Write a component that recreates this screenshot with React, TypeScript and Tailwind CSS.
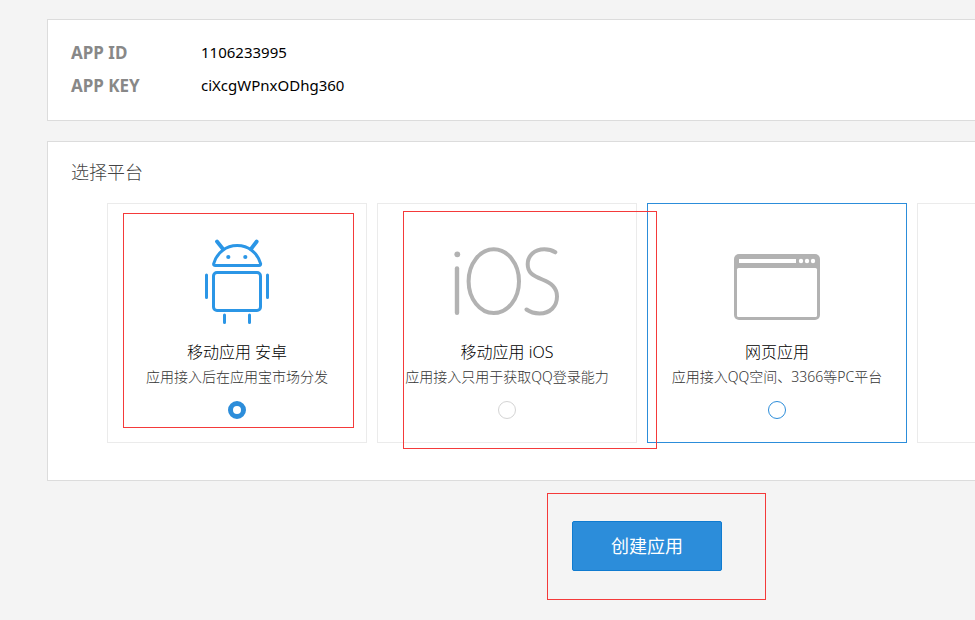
import type { ReactNode } from "react";

function AndroidIcon() {
  return (
    <svg width="120" height="92" viewBox="0 0 120 92" fill="none" stroke="#2b96e6" strokeWidth="3" strokeLinecap="round" strokeLinejoin="round" aria-hidden="true">
      <path d="M40 5.5 46 13M79.7 5.5 74 13" strokeWidth="3.8" />
      <path d="M36.7 27.6C40 16.5 49 9.6 60.2 9.6S80.4 16.5 83.6 27.6Q83.9 29.4 82 29.4H38.3Q36.3 29.4 36.7 27.6Z" />
      <circle cx="51.3" cy="21" r="2.1" fill="#2b96e6" stroke="none" />
      <circle cx="68.3" cy="21" r="2.1" fill="#2b96e6" stroke="none" />
      <rect x="36.5" y="36.5" width="47" height="38" rx="3.5" />
      <path d="M29.5 39V61.5M90.5 39V61.5M47.5 79V86.5M72.5 79V86.5" />
    </svg>
  );
}

function IosIcon() {
  return (
    <svg width="120" height="92" viewBox="0 0 120 92" fill="none" stroke="#b2b2b2" strokeWidth="4" strokeLinecap="round" aria-hidden="true">
      <circle cx="10.3" cy="18.3" r="2.9" fill="#b2b2b2" stroke="none" />
      <path d="M10 32.5V76.7" strokeWidth="4.4" />
      <ellipse cx="46.8" cy="45.2" rx="25.2" ry="31.9" />
      <path d="M108.3 16.3C105 14.2 101.5 13.3 97.3 13.3C87.5 13.3 80.7 19.5 80.7 28.3C80.7 36.5 85.5 39.5 95.3 43.5C104.5 47.2 110 51.5 110 60.5C110 70.5 103 77.4 92.5 77.4C87.5 77.4 83 76 79.5 73.5" />
    </svg>
  );
}

function WebIcon() {
  return (
    <svg width="120" height="92" viewBox="0 0 120 92" aria-hidden="true">
      <rect x="17" y="18" width="86" height="66" rx="5" fill="#b2b2b2" />
      <rect x="20" y="32" width="80" height="49" rx="1.5" fill="#fff" />
      <rect x="22" y="23" width="57" height="4" fill="#fff" />
      <circle cx="84" cy="25" r="2.2" fill="#fff" />
      <circle cx="90" cy="25" r="2.2" fill="#fff" />
      <circle cx="96" cy="25" r="2.2" fill="#fff" />
    </svg>
  );
}

type CardProps = {
  icon: ReactNode;
  title: string;
  desc: string;
  value: string;
  border?: string;
  radio?: string;
  checked?: boolean;
  mark?: string;
};

function PlatformCard({ icon, title, desc, value, border = "border-[#ebebeb]", radio = "border-[#d4d4d4]", checked, mark }: CardProps) {
  return (
    <label className={`relative flex w-[260px] cursor-pointer flex-col items-center border bg-white pt-8 pb-[23px] ${border}`}>
      {icon}
      <span className="mt-3 text-base leading-6 text-black">{title}</span>
      <span className="text-sm leading-[26px] whitespace-nowrap text-[#333]">{desc}</span>
      <input
        type="radio"
        name="platform"
        value={value}
        defaultChecked={checked}
        className={`mt-[11px] size-[18px] appearance-none rounded-full border bg-white checked:border-5 checked:border-[#2c8dda] ${radio}`}
      />
      {mark && <span className={`pointer-events-none absolute z-10 border border-[#f43a3a] ${mark}`} />}
    </label>
  );
}

export default function App() {
  return (
    <div className="min-h-screen overflow-x-hidden bg-[#f4f4f4] pt-[19px] pl-[47px] font-['Noto_Sans','Noto_Sans_CJK_SC',sans-serif] font-light">
      <main className="min-w-[1200px]">
        <section className="border border-[#dcdcdc] bg-white px-[23px] pt-4 pb-[18px]">
          <dl className="grid grid-cols-[130px_1fr] leading-[33px]">
            <dt className="text-[17px] font-bold text-[#888]">APP ID</dt>
            <dd className="text-[15px] font-normal text-black">1106233995</dd>
            <dt className="text-[17px] font-bold text-[#888]">APP KEY</dt>
            <dd className="text-[15px] font-normal text-black">ciXcgWPnxODhg360</dd>
          </dl>
        </section>

        <section className="mt-5 border border-[#dcdcdc] bg-white px-[23px] pt-4 pb-[37px]">
          <h2 className="text-lg leading-7 text-[#444]">选择平台</h2>
          <div className="mt-[17px] flex gap-2.5 pl-9">
            <PlatformCard
              icon={<AndroidIcon />}
              title="移动应用 安卓"
              desc="应用接入后在应用宝市场分发"
              value="android"
              checked
              mark="top-[9px] left-[15px] h-[215px] w-[231px]"
            />
            <PlatformCard
              icon={<IosIcon />}
              title="移动应用 iOS"
              desc="应用接入只用于获取QQ登录能力"
              value="ios"
              mark="top-[7px] left-[25px] h-[238px] w-[254px]"
            />
            <PlatformCard
              icon={<WebIcon />}
              title="网页应用"
              desc="应用接入QQ空间、3366等PC平台"
              value="web"
              border="border-[#2c8dda]"
              radio="border-[#2c8dda]"
            />
            <div className="w-[260px] border border-[#ebebeb]" />
          </div>
        </section>

        <div className="mt-10 flex justify-center pb-12">
          <div className="relative">
            <button type="button" className="h-[50px] w-[150px] cursor-pointer rounded-xs border border-[#0f7bd0] bg-[#2c8dda] text-lg font-normal text-white">
              创建应用
            </button>
            <span className="pointer-events-none absolute -top-7 -right-11 -bottom-[29px] -left-[25px] border border-[#f43a3a]" />
          </div>
        </div>
      </main>
    </div>
  );
}
